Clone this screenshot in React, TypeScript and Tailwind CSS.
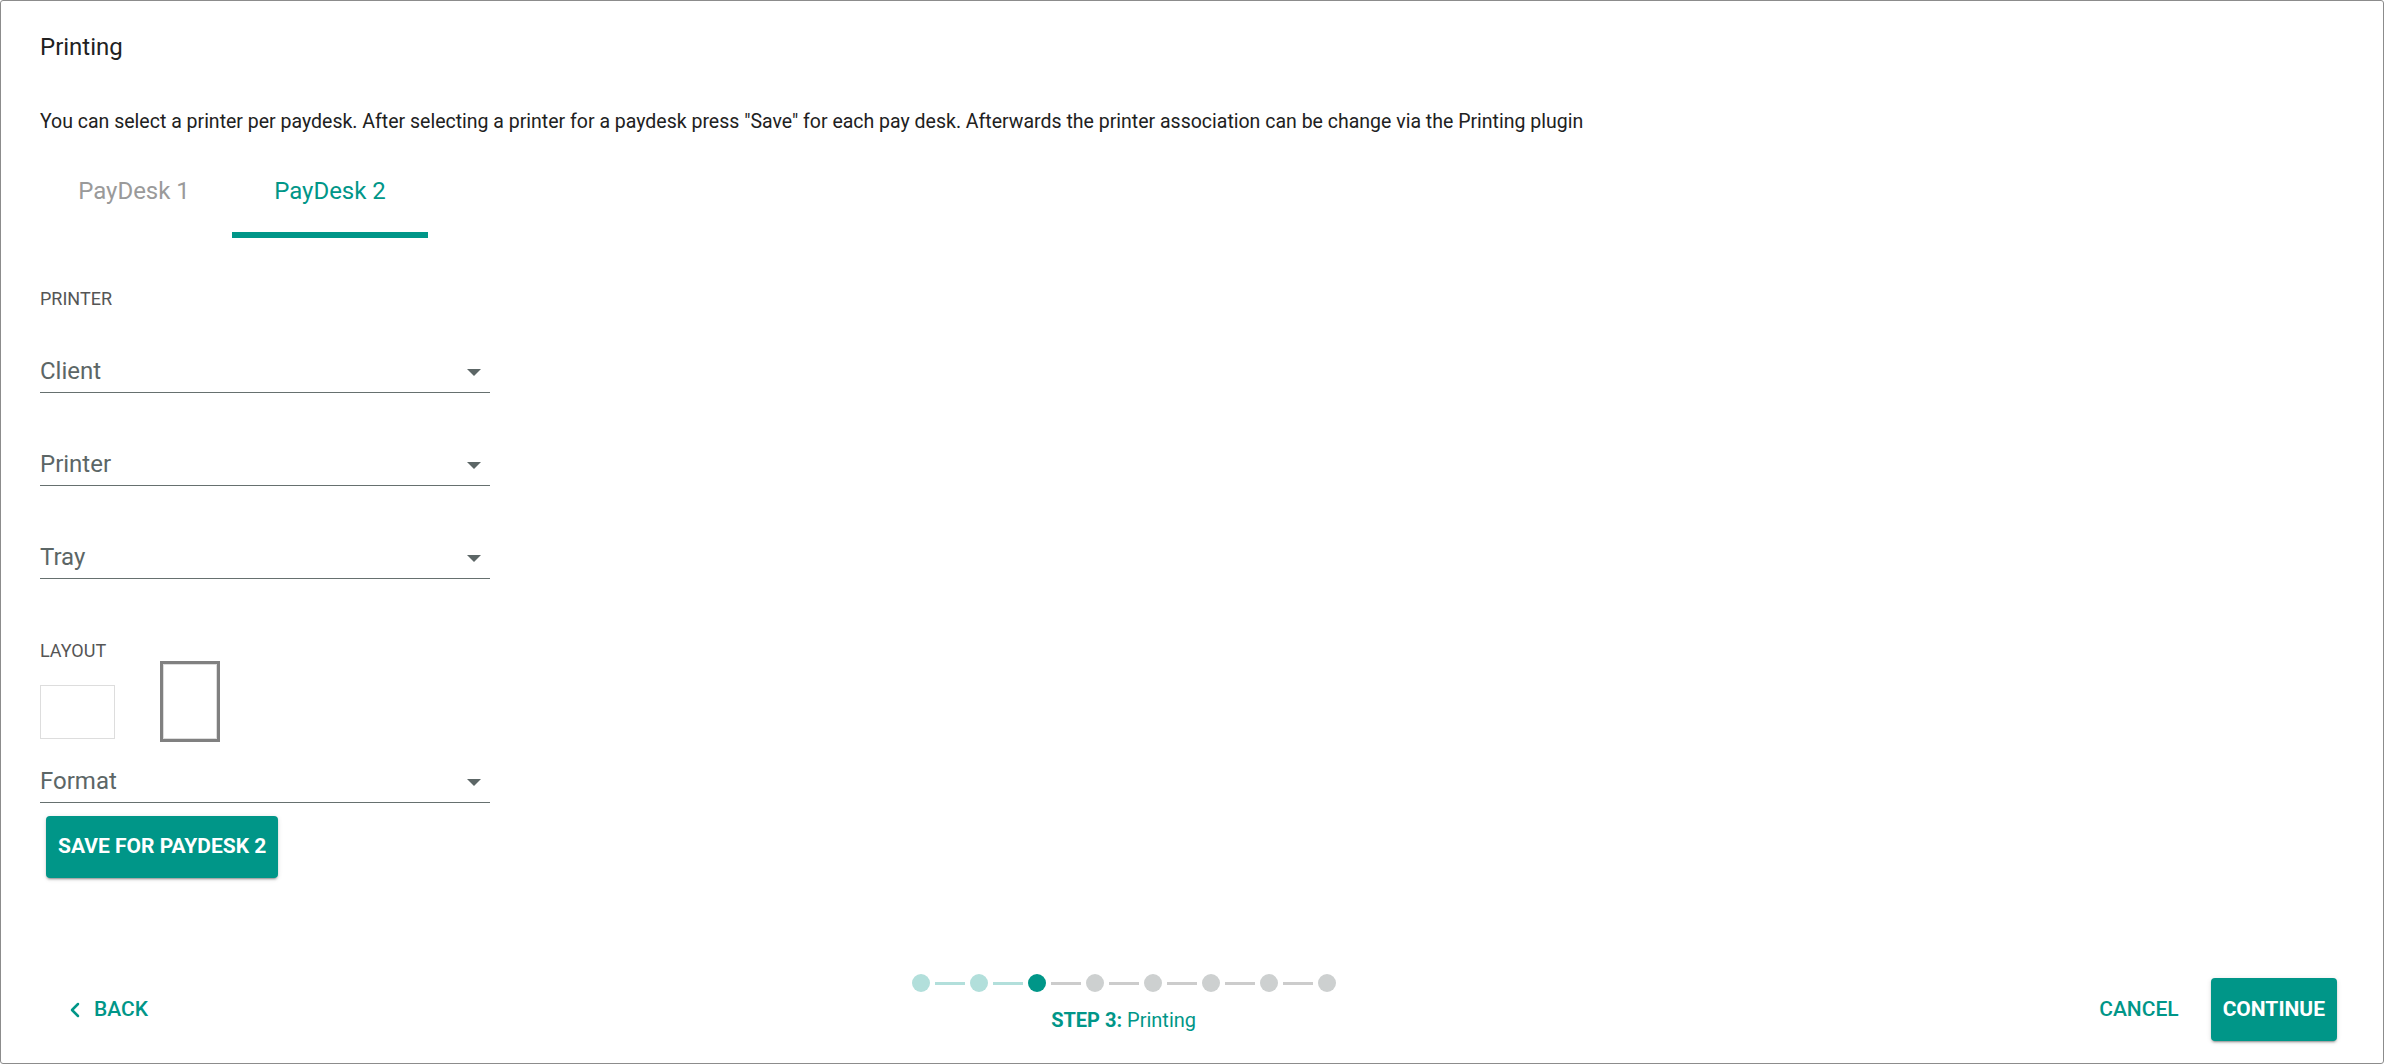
import { ChevronLeft } from "lucide-react";

const fields = ["Client", "Printer", "Tray"];

function SelectField({ label, className = "" }: { label: string; className?: string }) {
  return (
    <div className={`w-[450px] flex items-center justify-between pb-[5px] border-b border-[#66706f] ${className}`}>
      <span className="text-[24px] leading-[32px] text-[#5c6666]">{label}</span>
      <svg width="14" height="7" viewBox="0 0 14 7" className="mr-[9px] mt-[2px]">
        <path d="M0 0 L14 0 L7 7 Z" fill="#5c6666" />
      </svg>
    </div>
  );
}

function Stepper() {
  const total = 8;
  const current = 2;
  return (
    <div className="flex flex-col items-center mb-[11px]">
      <div className="flex items-center">
        {Array.from({ length: total }).map((_, i) => (
          <div key={i} className="flex items-center">
            {i > 0 && (
              <div className={`w-[30px] h-[3px] mx-[5px] ${i <= current ? "bg-[#b2dfdb]" : "bg-[#cccccc]"}`} />
            )}
            <div
              className={`w-[18px] h-[18px] rounded-full ${
                i < current ? "bg-[#b2dfdb]" : i === current ? "bg-[#009688]" : "bg-[#cdd0d0]"
              }`}
            />
          </div>
        ))}
      </div>
      <div className="mt-[14px] text-[20px] leading-[28px] text-[#009688]">
        <span className="font-bold">STEP 3:</span> Printing
      </div>
    </div>
  );
}

export default function App() {
  return (
    <div className="h-[1064px] w-full bg-white border border-[#8c8c8c] rounded-[3px] flex flex-col font-[Roboto,sans-serif] text-[#212121] overflow-hidden">
      <div className="flex-1 px-[39px] pt-[30px]">
        <h1 className="text-[24px] leading-[32px] font-normal">Printing</h1>
        <p className="mt-[45px] text-[19.5px] leading-[28px]">
          You can select a printer per paydesk. After selecting a printer for a paydesk press "Save" for each pay desk. Afterwards the printer association can be change via the Printing plugin
        </p>

        {/* Tabs */}
        <div className="mt-[14px] ml-[-4px] flex">
          <div className="relative w-[196px] h-[88px] flex items-center justify-center pb-[6px] text-[24px] text-[#9a9a9a]">
            PayDesk 1
          </div>
          <div className="relative w-[196px] h-[88px] flex items-center justify-center pb-[6px] text-[24px] text-[#009688]">
            PayDesk 2
            <div className="absolute left-0 right-0 bottom-0 h-[6px] bg-[#009688]" />
          </div>
        </div>

        <div className="mt-[49px] text-[18px] leading-[24px] text-[#555555]">PRINTER</div>

        <div className="mt-[44px] flex flex-col gap-[55px]">
          {fields.map((f) => (
            <SelectField key={f} label={f} />
          ))}
        </div>

        <div className="mt-[60px] text-[18px] leading-[24px] text-[#555555]">LAYOUT</div>
        <div className="mt-[1px] flex items-end gap-[48px]">
          <div className="w-[75px] h-[54px] border border-[#dddddd]" />
          <div className="w-[54px] h-[75px] border border-[#dddddd] outline-[3px] outline-solid outline-[#808080]" />
        </div>

        <SelectField label="Format" className="mt-[26px]" />

        <button className="mt-[13px] ml-[6px] h-[62px] px-[12px] rounded-[4px] bg-[#009688] text-white text-[21px] font-bold shadow-[0_3px_1px_-2px_rgba(0,0,0,0.2),0_2px_2px_0_rgba(0,0,0,0.14),0_1px_5px_0_rgba(0,0,0,0.12)]">
          SAVE FOR PAYDESK 2
        </button>
      </div>

      {/* Footer */}
      <div className="flex items-center justify-between pl-[62px] pr-[46px] pb-[18px]">
        <button className="flex items-center gap-[7px] text-[#009688] text-[21px] font-medium">
          <ChevronLeft className="w-[24px] h-[24px]" strokeWidth={2.5} />
          BACK
        </button>
        <Stepper />
        <div className="flex items-center gap-[32px]">
          <button className="text-[#009688] text-[21px] font-medium">CANCEL</button>
          <button className="h-[63px] px-[12px] rounded-[4px] bg-[#009688] text-white text-[21px] font-bold shadow-[0_3px_1px_-2px_rgba(0,0,0,0.2),0_2px_2px_0_rgba(0,0,0,0.14),0_1px_5px_0_rgba(0,0,0,0.12)]">
            CONTINUE
          </button>
        </div>
      </div>
    </div>
  );
}
